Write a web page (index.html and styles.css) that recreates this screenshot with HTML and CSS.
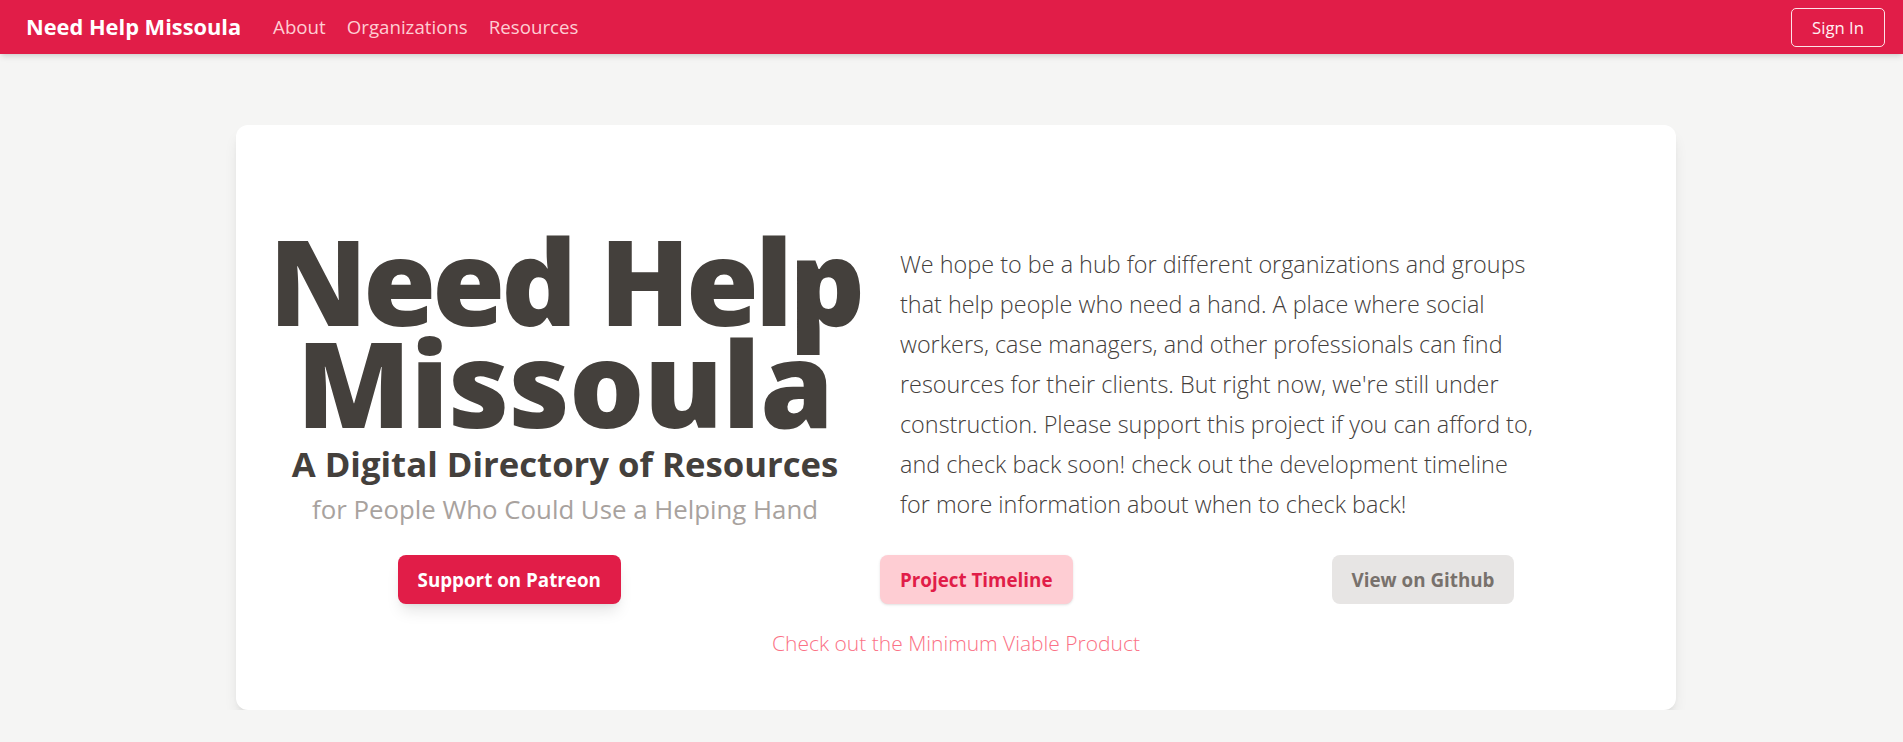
FILE: index.html
```html
<!DOCTYPE html>
<html lang="en">
<head>
<meta charset="utf-8">
<title>Need Help Missoula</title>
<link rel="stylesheet" href="styles.css">
</head>
<body>
<nav class="topbar">
  <div class="nav-left">
    <a class="brand" href="#">Need Help Missoula</a>
    <ul class="nav-links">
      <li><a href="#">About</a></li>
      <li><a href="#">Organizations</a></li>
      <li><a href="#">Resources</a></li>
    </ul>
  </div>
  <button class="signin">Sign In</button>
</nav>
<main class="page">
  <section class="card">
    <div class="hero">
      <div class="title-block">
        <h1 class="title"><span class="l1">Need Help</span><br><span class="l2">Missoula</span></h1>
        <h2 class="subtitle">A Digital Directory of Resources</h2>
        <p class="tagline">for People Who Could Use a Helping Hand</p>
      </div>
      <p class="intro">
        <span class="line">We hope to be a hub for different organizations and groups</span>
        <span class="line">that help people who need a hand. A place where social</span>
        <span class="line">workers, case managers, and other professionals can find</span>
        <span class="line">resources for their clients. But right now, we're still under</span>
        <span class="line">construction. Please support this project if you can afford to,</span>
        <span class="line">and check back soon! check out the development timeline</span>
        <span class="line">for more information about when to check back!</span>
      </p>
    </div>
    <div class="actions">
      <a class="btn btn-primary" href="#">Support on Patreon</a>
      <a class="btn btn-soft" href="#">Project Timeline</a>
      <a class="btn btn-muted" href="#">View on Github</a>
    </div>
    <p class="mvp"><a href="#">Check out the Minimum Viable Product</a></p>
  </section>
</main>
</body>
</html>
```
FILE: styles.css
```css
* { box-sizing: border-box; }
body {
  margin: 0;
  background: #f5f5f4;
  font-family: "Open Sans", "Noto Sans", sans-serif;
  color: #44403c;
}
.topbar {
  height: 54px;
  background: #e11d48;
  display: flex;
  align-items: center;
  justify-content: space-between;
  padding: 0 18px 0 26px;
  box-shadow: 0 4px 6px -1px rgba(0,0,0,.1), 0 2px 4px -2px rgba(0,0,0,.1);
  position: relative;
  z-index: 1;
}
.nav-left { display: flex; align-items: center; margin-top: -2px; }
.brand {
  font-size: 21.8px;
  font-weight: 700;
  color: #fff;
  text-decoration: none;
}
.nav-links {
  display: flex;
  list-style: none;
  margin: 0 0 0 32px;
  padding: 0;
  gap: 21px;
}
.nav-links a { color: #fecdd3; font-size: 18.7px; text-decoration: none; }
.signin {
  width: 94px;
  height: 39px;
  border: 1px solid #fde2e7;
  border-radius: 5px;
  background: transparent;
  color: #fff1f2;
  font: 400 16.7px "Open Sans", sans-serif;
  padding: 0;
}
.page { padding-top: 71px; }
.card {
  width: 1440px;
  height: 585px;
  margin-left: 236px;
  background: #fff;
  border-radius: 12px;
  box-shadow: 0 10px 15px -3px rgba(0,0,0,.1), 0 4px 6px -4px rgba(0,0,0,.1);
  padding: 105px 32px 0;
}
.hero { display: flex; align-items: flex-end; gap: 38px; }
.title-block { width: 594px; flex: none; text-align: center; white-space: nowrap; }
.title {
  margin: 0;
  font-size: 118px;
  line-height: 102px;
  font-weight: 800;
  color: #44403c;
}
.title .l1 { letter-spacing: -4px; }
.title .l2 { letter-spacing: -0.5px; }
.subtitle { margin: 0; font-size: 34.7px; line-height: 60px; font-weight: 700; color: #44403c; }
.tagline { margin: 0; font-size: 25.8px; line-height: 30px; color: #a8a29e; font-weight: 400; }
.intro { margin: 0; font-size: 23.4px; line-height: 40px; font-weight: 300; color: #44403c; }
.intro .line { display: block; white-space: nowrap; }
.actions { display: flex; justify-content: space-around; margin-top: 31px; }
.btn {
  display: inline-flex;
  align-items: center;
  height: 49px;
  padding: 0 20px;
  border-radius: 8px;
  font-size: 18.8px;
  font-weight: 700;
  text-decoration: none;
}
.btn-primary { background: #e11d48; color: #fff; box-shadow: 0 10px 15px -3px rgba(0,0,0,.1), 0 4px 6px -4px rgba(0,0,0,.1); }
.btn-soft { background: #fecdd3; color: #e11d48; box-shadow: 0 1px 3px rgba(0,0,0,.1), 0 1px 2px -1px rgba(0,0,0,.1); }
.btn-muted { background: #e7e5e4; color: #78716c; }
.mvp { margin: 23px 0 0; text-align: center; font-size: 21px; line-height: 32px; font-weight: 300; }
.mvp a { color: #fb7185; text-decoration: none; }
```
